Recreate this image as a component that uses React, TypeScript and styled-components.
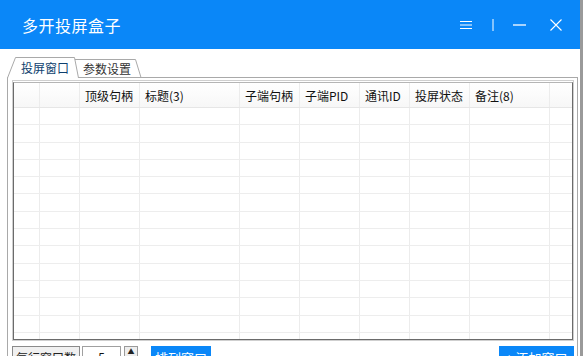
import React from 'react';
import styled, { createGlobalStyle } from 'styled-components';

const GlobalStyle = createGlobalStyle`
  html, body {
    margin: 0;
    padding: 0;
    background: #fff;
    overflow: hidden;
  }
  body {
    font-family: "Noto Sans CJK SC", "Liberation Sans", sans-serif;
  }
`;

const columns = [
  { title: '', width: 26 },
  { title: '', width: 40 },
  { title: '顶级句柄', width: 60 },
  { title: '标题(3)', width: 100 },
  { title: '子端句柄', width: 60 },
  { title: '子端PID', width: 60 },
  { title: '通讯ID', width: 50 },
  { title: '投屏状态', width: 60 },
  { title: '备注(8)', width: 80 },
  { title: '', width: 24 }
];

const rows = Array.from({ length: 14 }, (_, i) => i);

// tab outlines: active is a trapezoid, the other one a leaning parallelogram
const TabShape = ({ active }: { active?: boolean }) =>
  active ? (
    <TabSvg width="72" height="21" viewBox="0 0 72 21">
      <path d="M0.5 21L8.5 0.5H67.5L71.5 21" fill="#fff" stroke="#a9a9a9" />
    </TabSvg>
  ) : (
    <TabSvg width="72" height="19" viewBox="0 0 72 19">
      <path d="M0.5 18.5L4.5 0.5H65.5L71 18.5Z" fill="#fff" stroke="#a9a9a9" />
    </TabSvg>
  );

export default function App() {
  return (
    <>
      <GlobalStyle />
      <Window>
        <TitleBar>
          <Title>多开投屏盒子</Title>
          <Controls>
            <CtrlButton>
              <svg width="12" height="10" viewBox="0 0 12 10">
                <path d="M0 1.5H12M0 5H12M0 8.5H12" stroke="#fff" strokeWidth="1.2" />
              </svg>
            </CtrlButton>
            <CtrlButton>
              <svg width="2" height="12" viewBox="0 0 2 12">
                <path d="M1 0V12" stroke="#fff" strokeWidth="1" />
              </svg>
            </CtrlButton>
            <CtrlButton>
              <svg width="13" height="2" viewBox="0 0 13 2">
                <path d="M0 1H13" stroke="#fff" strokeWidth="1.3" />
              </svg>
            </CtrlButton>
            <CtrlButton>
              <svg width="12" height="12" viewBox="0 0 12 12">
                <path d="M0.5 0.5L11.5 11.5M11.5 0.5L0.5 11.5" stroke="#fff" strokeWidth="1.1" />
              </svg>
            </CtrlButton>
          </Controls>
        </TitleBar>
        <Body>
          <TabStrip>
            <Tab active>
              <TabShape active />
              <TabLabel active>投屏窗口</TabLabel>
            </Tab>
            <Tab>
              <TabShape />
              <TabLabel>参数设置</TabLabel>
            </Tab>
          </TabStrip>
          <Panel>
            <GridFrame>
              <Grid>
                <HeaderRow>
                  {columns.map((c, i) => (
                    <HeadCell key={i} style={{ width: c.width }}>
                      {c.title}
                    </HeadCell>
                  ))}
                </HeaderRow>
                {rows.map((r) => (
                  <Row key={r}>
                    {columns.map((c, i) => (
                      <Cell key={i} style={{ width: c.width }} />
                    ))}
                  </Row>
                ))}
              </Grid>
            </GridFrame>
            <BottomBar>
              <Label>每行窗口数</Label>
              <SpinInput>5</SpinInput>
              <SpinButton>▲</SpinButton>
              <BlueButton>排列窗口</BlueButton>
              <Spacer />
              <BlueButton wide>+ 添加窗口</BlueButton>
            </BottomBar>
          </Panel>
        </Body>
      </Window>
    </>
  );
}

const Window = styled.div`
  width: 580px;
  height: 356px;
  border-right: 3px solid #9a9a9a;
  display: flex;
  flex-direction: column;
  overflow: hidden;
  background: #fff;
`;

const TitleBar = styled.div`
  height: 49px;
  flex: none;
  background: #0a87f8;
  display: flex;
  align-items: center;
  padding-left: 22px;
  box-sizing: border-box;
`;

const Title = styled.div`
  color: #fff;
  font-size: 16px;
  letter-spacing: 0.5px;
  flex: 1;
`;

const Controls = styled.div`
  display: flex;
  align-items: center;
  margin-right: 11px;
`;

const CtrlButton = styled.div`
  width: 27px;
  height: 20px;
  display: flex;
  align-items: center;
  justify-content: center;
  &:last-child {
    margin-left: 9px;
  }
`;

const Body = styled.div`
  flex: 1;
  display: flex;
  flex-direction: column;
  padding: 8px 2px 0 7px;
  background: #fff;
`;

const TabStrip = styled.div`
  display: flex;
  height: 20px;
  padding-left: 0;
  position: relative;
  z-index: 1;
`;

const Tab = styled.div<{ active?: boolean }>`
  position: relative;
  width: 72px;
  height: ${(p) => (p.active ? '21px' : '19px')};
  margin-top: ${(p) => (p.active ? '0' : '2px')};
  margin-left: ${(p) => (p.active ? '0' : '-9px')};
  z-index: ${(p) => (p.active ? 2 : 1)};
`;

const TabSvg = styled.svg`
  position: absolute;
  left: 0;
  top: 0;
`;

const TabLabel = styled.div<{ active?: boolean }>`
  position: relative;
  height: 100%;
  display: flex;
  align-items: center;
  justify-content: center;
  padding-left: ${(p) => (p.active ? '4px' : '2px')};
  font-size: 12px;
  color: ${(p) => (p.active ? '#0e3f6e' : '#333')};
`;

const Panel = styled.div`
  flex: 1;
  border: 1px solid #a9a9a9;
  border-bottom: none;
  display: flex;
  flex-direction: column;
  padding: 2px 3px 0 4px;
`;

const GridFrame = styled.div`
  border: 1px solid #cfcfcf;
  padding: 1px 0 0 0;
  height: 261px;
  box-sizing: border-box;
  flex: none;
`;

const Grid = styled.div`
  border: 1px solid #6b6b6b;
  border-top: 1px solid #b5b5b5;
  height: 100%;
  box-sizing: border-box;
  overflow: hidden;
  background: #fff;
`;

const HeaderRow = styled.div`
  display: flex;
  height: 24px;
  border-bottom: 1px solid #e6e6e6;
  background: linear-gradient(#ffffff, #f7f7f7);
`;

const HeadCell = styled.div`
  flex: none;
  box-sizing: border-box;
  border-right: 1px solid #ececec;
  font-size: 12px;
  color: #111;
  display: flex;
  align-items: center;
  padding-left: 5px;
  white-space: nowrap;
  font-family: "Noto Sans CJK SC", "DejaVu Sans Mono", monospace;
`;

const Row = styled.div`
  display: flex;
  height: 17.3px;
  border-bottom: 1px solid #ededed;
  box-sizing: border-box;
`;

const Cell = styled.div`
  flex: none;
  box-sizing: border-box;
  border-right: 1px solid #ececec;
`;

const BottomBar = styled.div`
  display: flex;
  align-items: flex-start;
  margin-top: 5px;
  height: 24px;
`;

const Label = styled.div`
  height: 22px;
  width: 68px;
  box-sizing: border-box;
  border: 1px solid #8a8a8a;
  background: #f0f0f0;
  font-size: 12px;
  color: #222;
  display: flex;
  align-items: center;
  justify-content: center;
`;

const SpinInput = styled.div`
  width: 39px;
  height: 22px;
  box-sizing: border-box;
  margin-left: 2px;
  border: 1px solid #a0a0a0;
  font-size: 12px;
  text-align: center;
  line-height: 20px;
  color: #111;
`;

const SpinButton = styled.div`
  width: 14px;
  height: 11px;
  margin-left: 3px;
  box-sizing: border-box;
  border: 1px solid #9a9a9a;
  background: #eee;
  font-size: 7px;
  line-height: 9px;
  text-align: center;
  color: #222;
`;

const BlueButton = styled.div<{ wide?: boolean }>`
  margin-left: ${(p) => (p.wide ? '0' : '13px')};
  width: ${(p) => (p.wide ? '75px' : '60px')};
  height: 22px;
  background: #0a87f8;
  color: #fff;
  font-size: 13px;
  display: flex;
  align-items: center;
  justify-content: center;
`;

const Spacer = styled.div`
  flex: 1;
`;
